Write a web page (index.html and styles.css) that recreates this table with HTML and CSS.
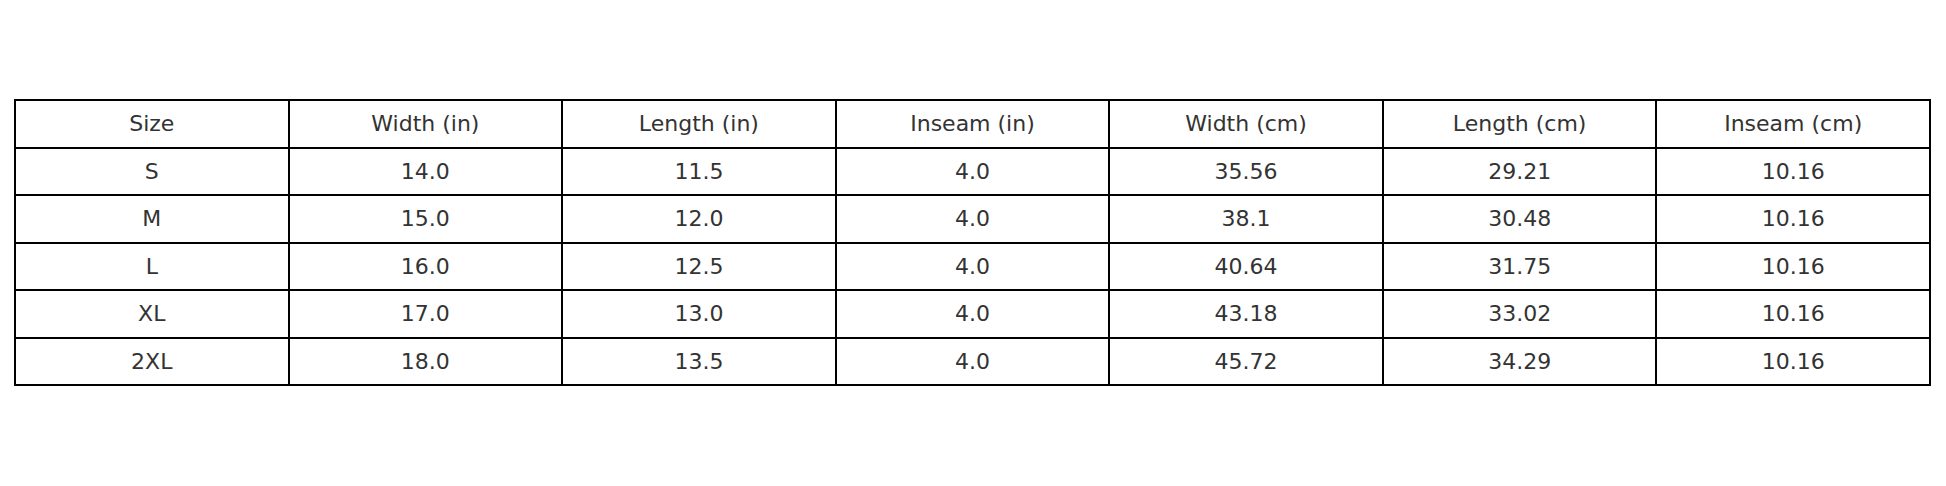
FILE: index.html
```html
<!DOCTYPE html>
<html>
<head>
<meta charset="utf-8">
<link rel="stylesheet" href="styles.css">
</head>
<body>
<div class="page">
  <div class="size-table">
    <div class="cell">Size</div><div class="cell">Width (in)</div><div class="cell">Length (in)</div><div class="cell">Inseam (in)</div><div class="cell">Width (cm)</div><div class="cell">Length (cm)</div><div class="cell">Inseam (cm)</div>
    <div class="cell">S</div><div class="cell">14.0</div><div class="cell">11.5</div><div class="cell">4.0</div><div class="cell">35.56</div><div class="cell">29.21</div><div class="cell">10.16</div>
    <div class="cell">M</div><div class="cell">15.0</div><div class="cell">12.0</div><div class="cell">4.0</div><div class="cell">38.1</div><div class="cell">30.48</div><div class="cell">10.16</div>
    <div class="cell">L</div><div class="cell">16.0</div><div class="cell">12.5</div><div class="cell">4.0</div><div class="cell">40.64</div><div class="cell">31.75</div><div class="cell">10.16</div>
    <div class="cell">XL</div><div class="cell">17.0</div><div class="cell">13.0</div><div class="cell">4.0</div><div class="cell">43.18</div><div class="cell">33.02</div><div class="cell">10.16</div>
    <div class="cell">2XL</div><div class="cell">18.0</div><div class="cell">13.5</div><div class="cell">4.0</div><div class="cell">45.72</div><div class="cell">34.29</div><div class="cell">10.16</div>
  </div>
</div>
</body>
</html>
```
FILE: styles.css
```css
html, body {
  margin: 0;
  background: #ffffff;
}
.page {
  padding: 99px 0 0 14px;
}
.size-table {
  width: 1917px;
  height: 287px;
  box-sizing: border-box;
  display: grid;
  grid-template-columns: repeat(7, 1fr);
  grid-template-rows: repeat(6, 1fr);
  gap: 2px;
  padding: 2px;
  background: #000000;
}
.cell {
  background: #ffffff;
  display: flex;
  align-items: center;
  justify-content: center;
  font-family: "DejaVu Sans", sans-serif;
  font-size: 22px;
  color: #333333;
}
```
